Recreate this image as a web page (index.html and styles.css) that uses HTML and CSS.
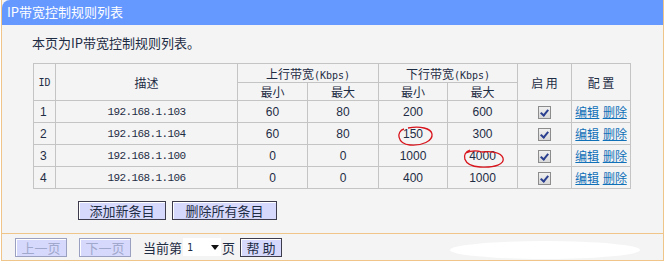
FILE: index.html
```html
<!DOCTYPE html>
<html lang="zh-CN">
<head>
    <meta charset="UTF-8">
    <title>IP带宽控制规则列表</title>
    <link rel="stylesheet" href="styles.css">
</head>
<body>
    <div class="panel">
        <div class="title">IP带宽控制规则列表</div>
        <div class="content">
            <div class="intro">本页为IP带宽控制规则列表。</div>
            <table class="rules">
                <colgroup>
                    <col style="width: 22px">
                    <col style="width: 182px">
                    <col style="width: 70px">
                    <col style="width: 71px">
                    <col style="width: 69px">
                    <col style="width: 70px">
                    <col style="width: 54px">
                    <col style="width: 59px">
                </colgroup>
                <tr class="head1">
                    <th rowspan="2" class="mono">ID</th>
                    <th rowspan="2">描述</th>
                    <th colspan="2">上行带宽<span class="mono">(Kbps)</span></th>
                    <th colspan="2">下行带宽<span class="mono">(Kbps)</span></th>
                    <th rowspan="2">启 用</th>
                    <th rowspan="2">配 置</th>
                </tr>
                <tr class="head2">
                    <th>最小</th><th>最大</th><th>最小</th><th>最大</th>
                </tr>
                <tr>
                    <td class="id">1</td><td class="ip">192.168.1.103</td>
                    <td>60</td><td>80</td><td>200</td><td>600</td>
                    <td><span class="check"></span></td>
                    <td class="ops"><a href="#">编辑</a> <a href="#">删除</a></td>
                </tr>
                <tr>
                    <td class="id">2</td><td class="ip">192.168.1.104</td>
                    <td>60</td><td>80</td><td>150</td><td>300</td>
                    <td><span class="check"></span></td>
                    <td class="ops"><a href="#">编辑</a> <a href="#">删除</a></td>
                </tr>
                <tr>
                    <td class="id">3</td><td class="ip">192.168.1.100</td>
                    <td>0</td><td>0</td><td>1000</td><td>4000</td>
                    <td><span class="check"></span></td>
                    <td class="ops"><a href="#">编辑</a> <a href="#">删除</a></td>
                </tr>
                <tr>
                    <td class="id">4</td><td class="ip">192.168.1.106</td>
                    <td>0</td><td>0</td><td>400</td><td>1000</td>
                    <td><span class="check"></span></td>
                    <td class="ops"><a href="#">编辑</a> <a href="#">删除</a></td>
                </tr>
            </table>
            <div class="actions">
                <button class="btn add">添加新条目</button>
                <button class="btn delall">删除所有条目</button>
            </div>
        </div>
        <div class="pager">
            <button class="btn off prev">上一页</button>
            <button class="btn off next">下一页</button>
            <span class="cur">当前第</span>
            <span class="select">1<span class="arrow"></span></span>
            <span class="cur">页</span>
            <button class="btn help">帮 助</button>
        </div>
    </div>

    <!-- hand drawn marks over the screenshot -->
    <svg class="marks" width="666" height="261" viewBox="0 0 666 261">
        <path d="M404 129 C 396 131, 397 144, 410 145 C 422 146, 433 141, 432 134 C 431 128, 420 126, 408 128"
              fill="none" stroke="#d8141c" stroke-width="1.3"/>
        <path d="M470 150 C 461 153, 462 166, 480 167 C 495 168, 505 164, 503 158 C 501 152, 490 151, 482 152 C 476 150, 470 151, 466 153"
              fill="none" stroke="#d8141c" stroke-width="1.3"/>
        <ellipse cx="545" cy="250" rx="95" ry="9" fill="#ffffff"/>
    </svg>
</body>
</html>
```

FILE: styles.css
```css
body {
    margin: 0;
    background: #ffffff;
    font-family: "Noto Sans CJK SC", "Liberation Sans", sans-serif;
    font-size: 12px;
    color: #1e2c44;
}

.panel {
    width: 661px;
    margin-left: 1px;
    border-left: 1px solid #f0c58a;
    border-right: 1px solid #f0c58a;
    background: #f4f4f4;
}

.title {
    height: 25px;
    line-height: 24px;
    padding-left: 5px;
    background: #6699ff;
    color: #ffffff;
    font-size: 13px;
    border-top-left-radius: 8px;
}

.content {
    padding: 8px 0 13px 30px;
    border-bottom: 1px solid #f0c58a;
}

.intro {
    font-size: 13px;
    height: 22px;
    line-height: 20px;
    margin-bottom: 8px;
}

.mono {
    font-family: "DejaVu Sans Mono", "Liberation Mono", monospace;
    font-size: 10px;
}

.rules {
    border-collapse: collapse;
    table-layout: fixed;
    width: 597px;
    margin-left: 1px;
}

.rules th,
.rules td {
    border: 1px solid #c4c4c4;
    text-align: center;
    padding: 0;
    font-weight: normal;
    font-size: 12px;
}

.rules th.mono {
    font-size: 10px;
}

.head1 th {
    height: 18px;
}

.head2 th {
    height: 17px;
}

.rules td {
    height: 21px;
    font-family: "Liberation Sans", sans-serif;
}

.rules td.ip {
    font-family: "Liberation Mono", monospace;
    font-size: 11px;
    letter-spacing: -0.6px;
}

.rules td.id {
    text-align: left;
    padding-left: 6px;
}

.check {
    display: inline-block;
    width: 11px;
    height: 11px;
    border: 1px solid #8c8c8c;
    background: linear-gradient(#f0f0f0, #d8d8d8);
    vertical-align: middle;
    position: relative;
}

.check::after {
    content: "";
    position: absolute;
    left: 3px;
    top: 1px;
    width: 3px;
    height: 6px;
    border-right: 2px solid #2a3f8f;
    border-bottom: 2px solid #2a3f8f;
    transform: rotate(40deg);
}

.ops {
    font-family: "Noto Sans CJK SC", sans-serif;
}

.ops a {
    color: #1070b8;
    text-decoration: underline;
    font-size: 12px;
}

.actions {
    display: flex;
    gap: 6px;
    margin: 12px 0 0 46px;
}

.btn {
    font-family: "Noto Sans CJK SC", sans-serif;
    font-size: 13px;
    height: 19px;
    line-height: 15px;
    padding: 0;
    background: #d6d9fb;
    border: 1px solid #3c3c4c;
    box-shadow: inset 1px 1px 0 #ffffff;
    color: #1e2c44;
}

.add {
    width: 88px;
}

.delall {
    width: 105px;
}

.pager {
    display: flex;
    align-items: center;
    height: 26px;
    padding-left: 13px;
    border-bottom: 1px solid #f0c58a;
}

.btn.off {
    width: 52px;
    color: #a0a8cc;
    border-color: #9aa0c0;
    margin-right: 12px;
}

.cur {
    font-size: 13px;
}

.select {
    display: inline-flex;
    align-items: center;
    justify-content: space-between;
    width: 38px;
    height: 18px;
    margin: 0 1px;
    padding: 0 2px 0 4px;
    background: #ffffff;
    font-family: "DejaVu Sans Mono", monospace;
    font-size: 10px;
    box-sizing: border-box;
}

.arrow {
    width: 0;
    height: 0;
    border-left: 4px solid transparent;
    border-right: 4px solid transparent;
    border-top: 5px solid #111111;
}

.help {
    width: 42px;
    margin-left: 5px;
}

.marks {
    position: absolute;
    left: 0;
    top: 0;
    pointer-events: none;
}
```
